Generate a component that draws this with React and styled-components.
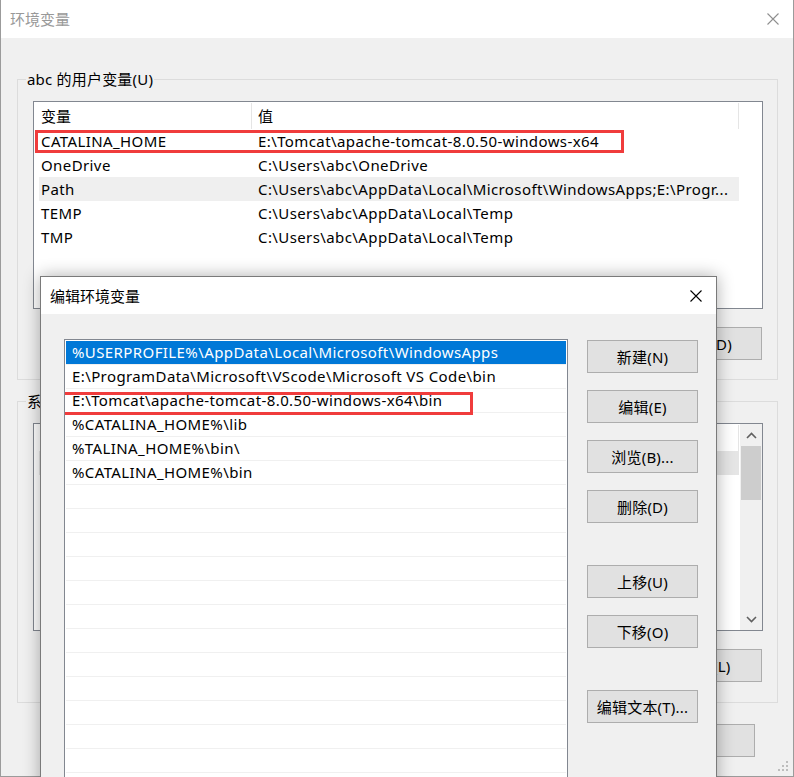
import React from "react";
import styled, { createGlobalStyle } from "styled-components";

const FONT = `"Noto Sans", "Noto Sans CJK SC", sans-serif`;

const Global = createGlobalStyle`
  html, body { margin: 0; padding: 0; background: #f0f0f0; }
  body { font-family: ${FONT}; font-size: 15px; letter-spacing: 0.4px; color: #000; }
  * { box-sizing: border-box; }
`;

const Stage = styled.div`
  position: relative;
  width: 794px;
  height: 777px;
  overflow: hidden;
  background: #f0f0f0;
`;

const Window = styled.div`
  position: relative;
  width: 794px;
  height: 777px;
  border: 1px solid #9b9b9b;
  border-top: none;
  background: #f0f0f0;
  display: flex;
  flex-direction: column;
`;

const TitleBar = styled.div`
  flex: none;
  height: ${(p) => p.$h}px;
  background: #fff;
  display: flex;
  align-items: center;
  justify-content: space-between;
  padding: 0 ${(p) => p.$pr}px 0 9px;
  color: ${(p) => (p.$active ? "#000" : "#999")};
  font-size: 15px;
  letter-spacing: 0;
  line-height: 20px;
`;

const CloseIcon = ({ color }) => (
  <svg width="12" height="12" viewBox="0 0 12 12" style={{ display: "block" }}>
    <path d="M0.5 0.5 L11.5 11.5 M11.5 0.5 L0.5 11.5" stroke={color} strokeWidth="1.1" fill="none" />
  </svg>
);

const WindowBody = styled.div`
  display: flex;
  flex-direction: column;
  padding: 41px 0 0 16px;
`;

const Group = styled.div`
  position: relative;
  flex: none;
  width: 761px;
  height: ${(p) => p.$h}px;
  margin-top: ${(p) => p.$mt || 0}px;
  border: 1px solid #dcdcdc;
  padding: 21px 15px 0 15px;
  display: flex;
  flex-direction: column;
  gap: 18px;
`;

const Legend = styled.span`
  position: absolute;
  left: 8px;
  top: -11px;
  padding: 0 1px;
  background: #f0f0f0;
  line-height: 20px;
  letter-spacing: 0.2px;
  white-space: nowrap;
`;

const ListView = styled.div`
  flex: none;
  width: 730px;
  height: 208px;
  border: 1px solid #828790;
  background: #fff;
  display: flex;
  overflow: hidden;
`;

const ListMain = styled.div`
  flex: 1;
  display: flex;
  flex-direction: column;
  min-width: 0;
`;

const Header = styled.div`
  flex: none;
  display: grid;
  grid-template-columns: 217px 1px 486px 1px 1fr;
  height: 27px;
  align-items: center;
`;

const HeadCell = styled.div`
  padding-left: ${(p) => p.$pl}px;
  line-height: 20px;
  letter-spacing: 0;
  white-space: nowrap;
`;

const HeadSep = styled.div`
  align-self: stretch;
  margin-top: 1px;
  background: #e5e5e5;
`;

const VarRow = styled.div`
  position: relative;
  flex: none;
  display: grid;
  grid-template-columns: 217px 1fr;
  width: 700px;
  margin-left: 5px;
  height: 24px;
  align-items: center;
  background: ${(p) => (p.$sel ? p.$sel : "transparent")};
`;

const Cell = styled.span`
  padding-left: 2px;
  white-space: nowrap;
  overflow: hidden;
  line-height: 20px;
`;

const Mark = styled.div`
  position: absolute;
  left: ${(p) => p.$l}px;
  top: ${(p) => p.$t}px;
  width: ${(p) => p.$w}px;
  height: ${(p) => p.$h}px;
  border: 3px solid #f03c3c;
  pointer-events: none;
`;

const ScrollBar = styled.div`
  flex: none;
  width: 22px;
  background: #f0f0f0;
  display: flex;
  flex-direction: column;
  align-items: stretch;
`;

const ScrollArrow = styled.div`
  flex: none;
  height: 22px;
  display: flex;
  align-items: center;
  justify-content: center;
  padding-left: 1px;
`;

const Thumb = styled.div`
  flex: none;
  height: 54px;
  margin: 0 1px 0 1px;
  background: #cdcdcd;
`;

const ScrollFill = styled.div`
  flex: 1;
`;

const Chevron = ({ up }) => (
  <svg width="11" height="7" viewBox="0 0 11 7" style={{ display: "block" }}>
    <path
      d={up ? "M1 6 L5.5 1.5 L10 6" : "M1 1 L5.5 5.5 L10 1"}
      stroke="#606060"
      strokeWidth="1.6"
      fill="none"
    />
  </svg>
);

const ButtonRow = styled.div`
  flex: none;
  display: flex;
  justify-content: flex-end;
  gap: 10px;
  padding-right: ${(p) => p.$pr || 0}px;
  margin-top: ${(p) => p.$mt || 0}px;
  width: ${(p) => (p.$w ? `${p.$w}px` : "auto")};
`;

const Button = styled.div`
  flex: none;
  width: 111px;
  height: 33px;
  margin-top: ${(p) => p.$mt || 0}px;
  background: #e1e1e1;
  border: 1px solid #adadad;
  display: flex;
  align-items: center;
  justify-content: center;
  font-size: 15px;
  letter-spacing: 0.2px;
  line-height: 20px;
  white-space: nowrap;
  color: #000;
`;

const Grip = styled.div`
  position: absolute;
  right: 3px;
  bottom: 3px;
`;

const Dialog = styled.div`
  position: absolute;
  left: 40px;
  top: 276px;
  width: 677px;
  height: 540px;
  border: 1px solid #7a7a7a;
  background: #f0f0f0;
  box-shadow: 0 0 16px rgba(0, 0, 0, 0.32);
  display: flex;
  flex-direction: column;
`;

const DialogBody = styled.div`
  flex: 1;
  display: flex;
  gap: 19px;
  padding: 25px 0 0 23px;
  min-height: 0;
`;

const EditList = styled.div`
  flex: none;
  width: 504px;
  border: 1px solid #828790;
  padding: 1px;
  background: #fff;
  display: flex;
  flex-direction: column;
  overflow: hidden;
`;

const EditRow = styled.div`
  position: relative;
  flex: none;
  height: 24px;
  border-bottom: 1px solid #f0f0f0;
  padding-left: 6px;
  line-height: 23px;
  white-space: nowrap;
  background: ${(p) => (p.$sel ? "#0078d7" : "transparent")};
  color: ${(p) => (p.$sel ? "#fff" : "#000")};
`;

const ButtonColumn = styled.div`
  flex: none;
  display: flex;
  flex-direction: column;
  padding-top: 1px;
`;

const userVars = [
  ["CATALINA_HOME", "E:\\Tomcat\\apache-tomcat-8.0.50-windows-x64"],
  ["OneDrive", "C:\\Users\\abc\\OneDrive"],
  ["Path", "C:\\Users\\abc\\AppData\\Local\\Microsoft\\WindowsApps;E:\\Progr..."],
  ["TEMP", "C:\\Users\\abc\\AppData\\Local\\Temp"],
  ["TMP", "C:\\Users\\abc\\AppData\\Local\\Temp"],
];

const sysRowCount = 7;

const pathItems = [
  "%USERPROFILE%\\AppData\\Local\\Microsoft\\WindowsApps",
  "E:\\ProgramData\\Microsoft\\VScode\\Microsoft VS Code\\bin",
  "E:\\Tomcat\\apache-tomcat-8.0.50-windows-x64\\bin",
  "%CATALINA_HOME%\\lib",
  "%TALINA_HOME%\\bin\\",
  "%CATALINA_HOME%\\bin",
];

const VarHeader = ({ labels }) => (
  <Header>
    <HeadCell $pl={7}>{labels ? "变量" : ""}</HeadCell>
    <HeadSep />
    <HeadCell $pl={6}>{labels ? "值" : ""}</HeadCell>
    <HeadSep />
    <div />
  </Header>
);

export default function App() {
  const emptyRows = Array.from({ length: 14 });
  return (
    <>
      <Global />
      <Stage>
        <Window>
          <TitleBar $h={38} $pr={14}>
            <span>环境变量</span>
            <CloseIcon color="#8f8f8f" />
          </TitleBar>
          <WindowBody>
            <Group $h={301}>
              <Legend>abc 的用户变量(U)</Legend>
              <ListView>
                <ListMain>
                  <VarHeader labels />
                  {userVars.map(([k, v], i) => (
                    <VarRow key={k} $sel={k === "Path" ? "#efefef" : null}>
                      <Cell>{k}</Cell>
                      <Cell>{v}</Cell>
                      {i === 0 && <Mark $l={-4} $t={1} $w={589} $h={23} />}
                    </VarRow>
                  ))}
                </ListMain>
              </ListView>
              <ButtonRow>
                <Button />
                <Button />
                <Button>删除(D)</Button>
              </ButtonRow>
            </Group>
            <Group $h={302} $mt={21}>
              <Legend>系统变量(S)</Legend>
              <ListView>
                <ListMain>
                  <VarHeader />
                  {Array.from({ length: sysRowCount }).map((_, i) => (
                    <VarRow key={i} $sel={i === 0 ? "#e5e5e5" : null} />
                  ))}
                </ListMain>
                <ScrollBar>
                  <ScrollArrow>
                    <Chevron up />
                  </ScrollArrow>
                  <Thumb />
                  <ScrollFill />
                  <ScrollArrow>
                    <Chevron />
                  </ScrollArrow>
                </ScrollBar>
              </ListView>
              <ButtonRow>
                <Button />
                <Button />
                <Button>删除(L)</Button>
              </ButtonRow>
            </Group>
            <ButtonRow $w={761} $pr={23} $mt={21}>
              <Button />
              <Button />
            </ButtonRow>
          </WindowBody>
          <Grip>
            <svg width="12" height="12" viewBox="0 0 12 12" style={{ display: "block" }}>
              <g fill="#bdbdbd">
                <rect x="8" y="0" width="2" height="2" />
                <rect x="4" y="4" width="2" height="2" />
                <rect x="8" y="4" width="2" height="2" />
                <rect x="0" y="8" width="2" height="2" />
                <rect x="4" y="8" width="2" height="2" />
                <rect x="8" y="8" width="2" height="2" />
              </g>
            </svg>
          </Grip>
        </Window>

        <Dialog>
          <TitleBar $h={37} $pr={14} $active>
            <span>编辑环境变量</span>
            <CloseIcon color="#000" />
          </TitleBar>
          <DialogBody>
            <EditList>
              {pathItems.map((t, i) => (
                <EditRow key={t} $sel={i === 0}>
                  {t}
                  {i === 2 && <Mark $l={-8} $t={3} $w={415} $h={23} />}
                </EditRow>
              ))}
              {emptyRows.map((_, i) => (
                <EditRow key={`e${i}`} />
              ))}
            </EditList>
            <ButtonColumn>
              <Button>新建(N)</Button>
              <Button $mt={17}>编辑(E)</Button>
              <Button $mt={17}>浏览(B)...</Button>
              <Button $mt={17}>删除(D)</Button>
              <Button $mt={42}>上移(U)</Button>
              <Button $mt={17}>下移(O)</Button>
              <Button $mt={42}>编辑文本(T)...</Button>
            </ButtonColumn>
          </DialogBody>
        </Dialog>
      </Stage>
    </>
  );
}
